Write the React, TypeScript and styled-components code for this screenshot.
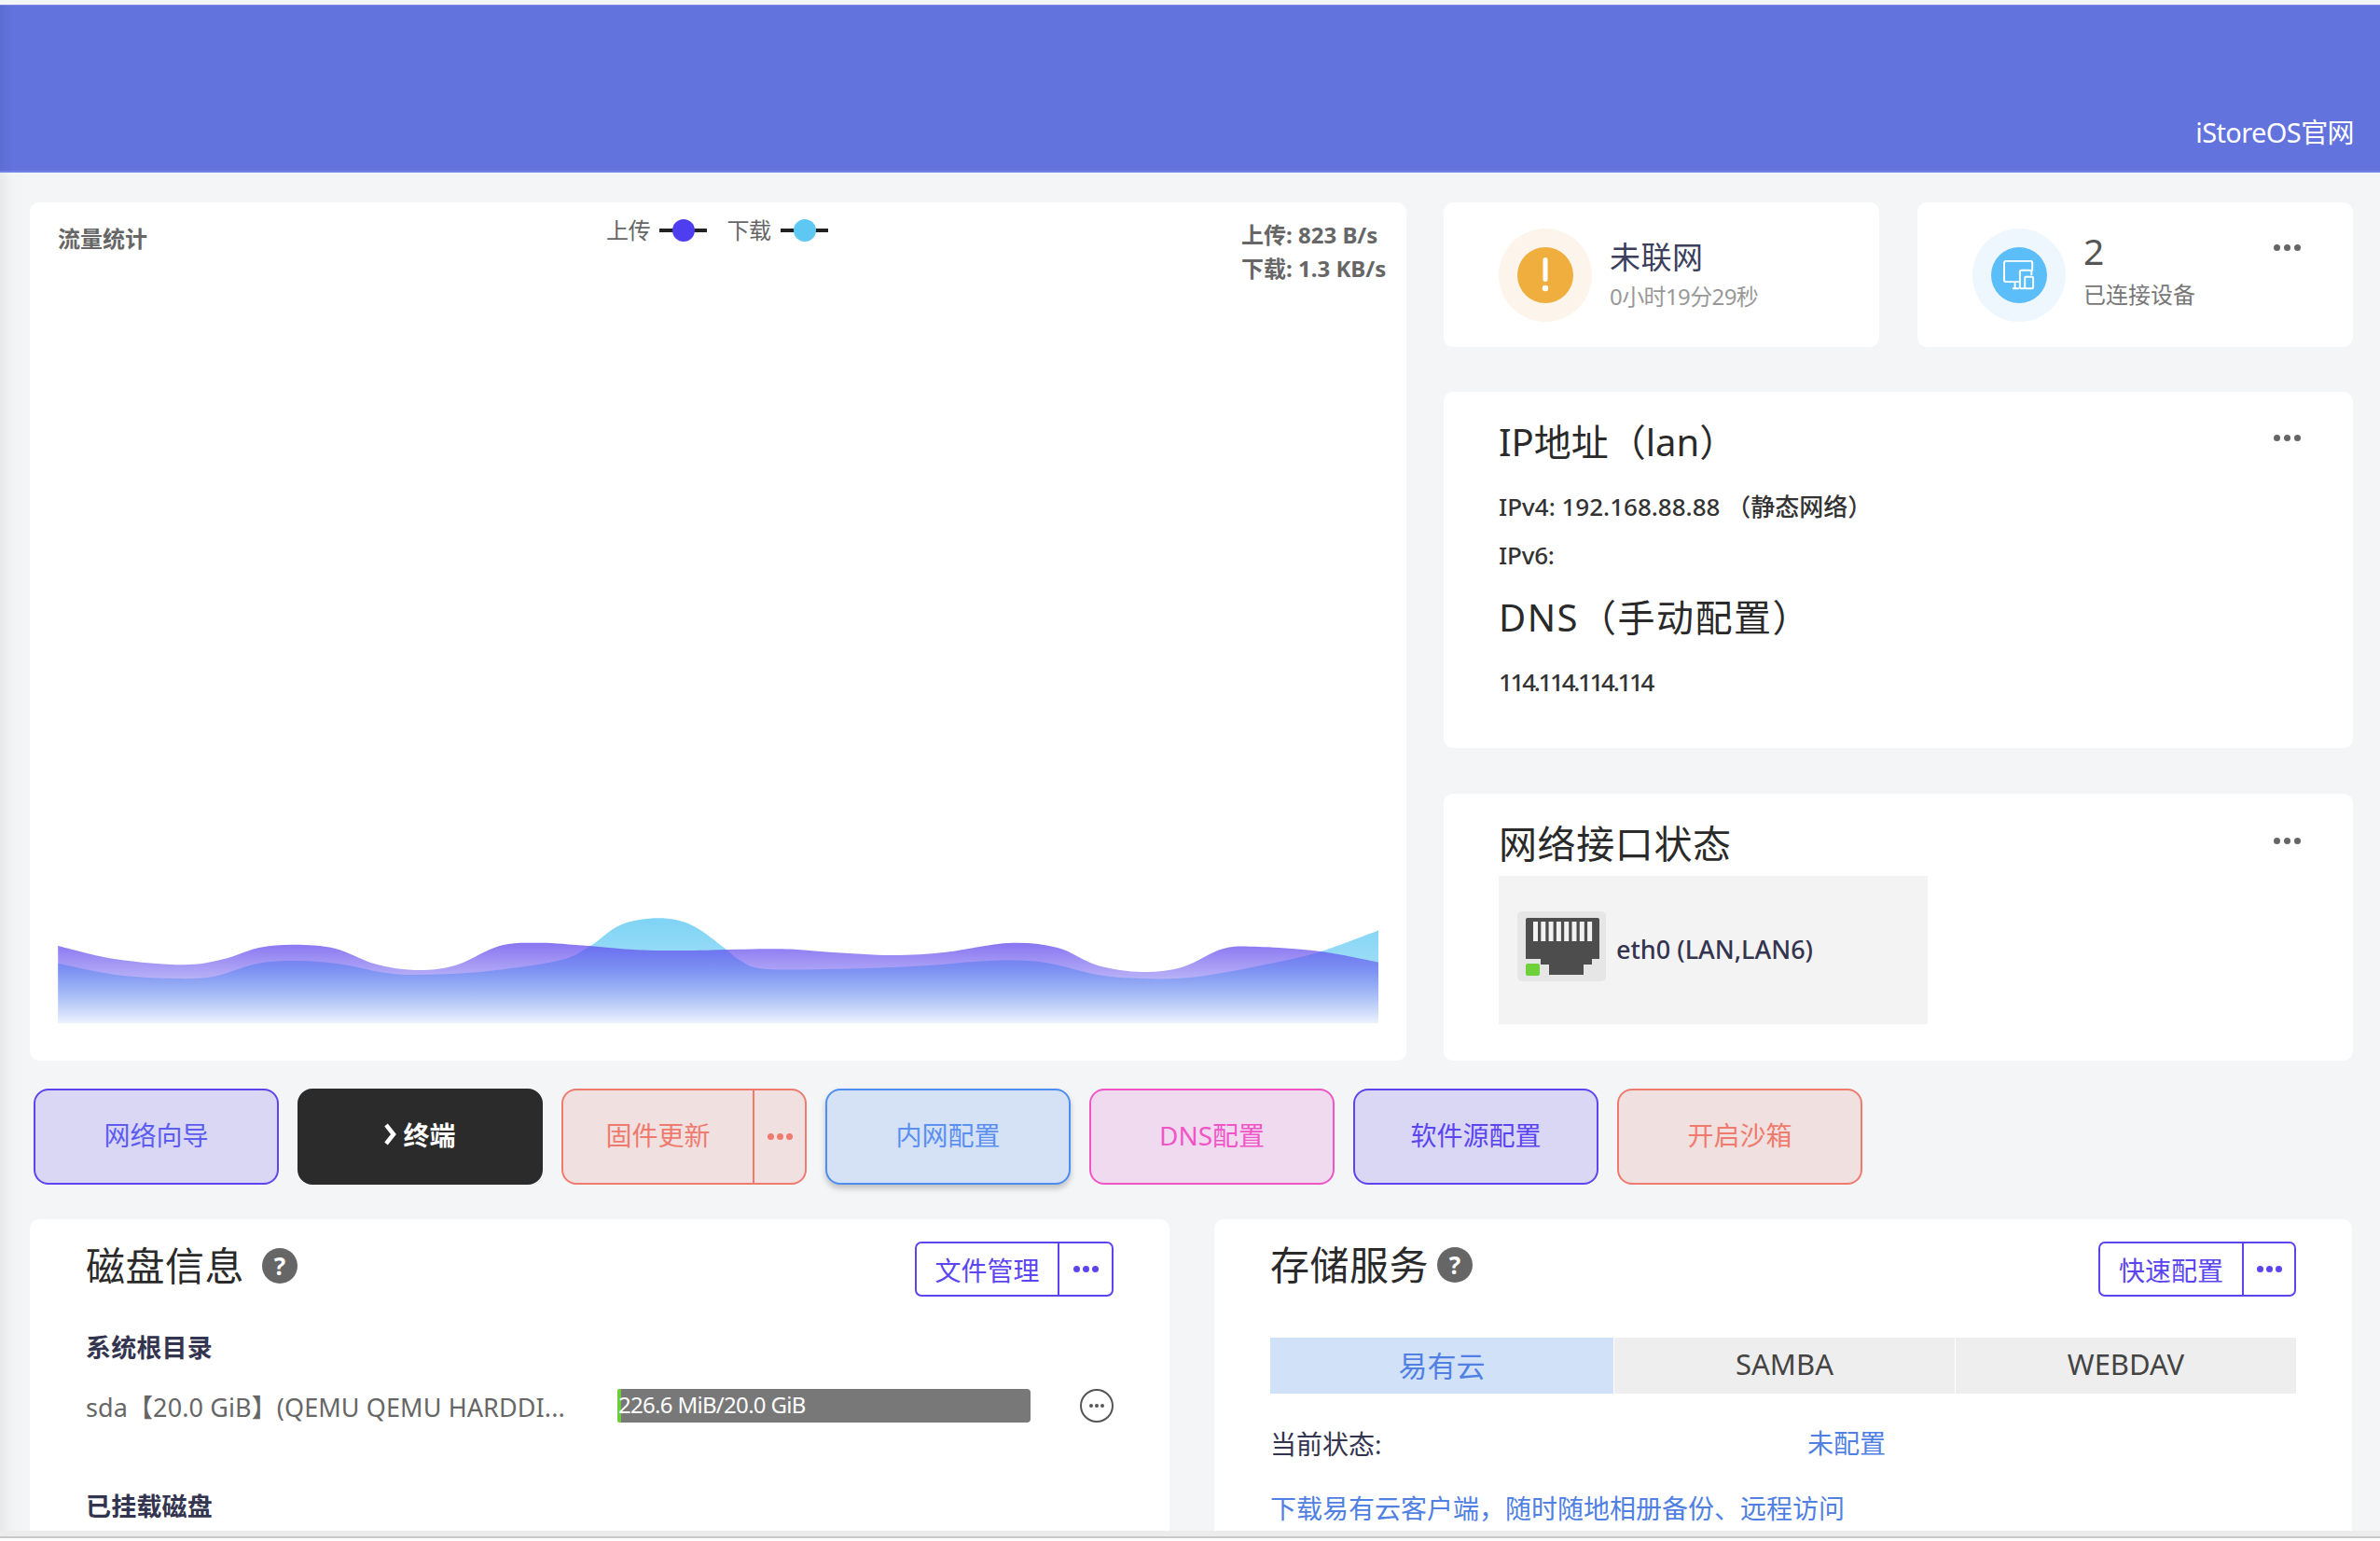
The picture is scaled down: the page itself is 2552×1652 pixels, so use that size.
import React from "react";
import styled, { createGlobalStyle } from "styled-components";

const FONT = `"Noto Sans", "Noto Sans CJK SC", "Liberation Sans", sans-serif`;

const Global = createGlobalStyle`
  html, body { margin: 0; padding: 0; background: #fff; }
  body { font-family: ${FONT}; }
  * { box-sizing: border-box; }
`;

const Frame = styled.div`
  width: 2552px;
  height: 1652px;
  overflow: hidden;
  display: flex;
  flex-direction: column;
  background: #fff;
`;
const Viewport = styled.div`
  height: 1641px;
  overflow: hidden;
  flex: none;
  background: #f4f5f7;
  padding-top: 5px;
`;
const BottomBar = styled.div`
  height: 8px;
  flex: none;
  background: #ececec;
  border-bottom: 2px solid #c9c9c9;
`;
const Header = styled.header`
  height: 180px;
  background: linear-gradient(90deg, #5b6dd2 0, #6373dd 14px, #6373dd 100%);
  border-top: 1px solid #7a87e4;
  border-bottom: 2px solid #7381e6;
  display: flex;
  justify-content: flex-end;
  align-items: flex-end;
  padding: 0 28px 23px 0;
`;
const HeaderLink = styled.a`
  color: #fff;
  font-size: 29px;
  line-height: 36px;
  letter-spacing: -0.6px;
`;
const Main = styled.main`
  background: linear-gradient(90deg, #e8e9eb 0, #f3f4f6 14px, #f4f5f7 32px);
  padding: 32px 29px 0 32px;
  height: 1456px;
  overflow: hidden;
`;
const TopRow = styled.div`
  display: grid;
  grid-template-columns: 1476px 975px;
  column-gap: 40px;
  height: 920px;
`;
const Card = styled.section`
  background: #fff;
  border-radius: 10px;
`;
const ChartCard = styled(Card)`
  display: flex;
  flex-direction: column;
  justify-content: space-between;
  padding: 18px 20px 40px 30px;
`;
const ChartHead = styled.div`
  display: flex;
  align-items: flex-start;
`;
const ChartTitle = styled.div`
  width: 588px;
  padding-top: 5px;
  font-size: 24px;
  line-height: 32px;
  font-weight: 700;
  color: #666;
`;
const Legend = styled.div`
  display: flex;
  align-items: center;
  width: 681px;
  height: 24px;
`;
const LegendLabel = styled.span`
  font-size: 24px;
  line-height: 24px;
  color: #666;
  letter-spacing: -0.3px;
`;
const LegendLine = styled.span<{ $c: string; $gap: number }>`
  position: relative;
  width: 51px;
  height: 4px;
  margin: 0 ${(p) => p.$gap}px 0 10px;
  background: #222;
  &::after {
    content: "";
    position: absolute;
    left: 14px;
    top: -10px;
    width: 24px;
    height: 24px;
    border-radius: 50%;
    background: ${(p) => p.$c};
  }
`;
const Rates = styled.div`
  padding-top: 1px;
  display: flex;
  flex-direction: column;
  gap: 4px;
`;
const RateLine = styled.div`
  font-size: 24px;
  line-height: 32px;
  font-weight: 700;
  color: #666;
  white-space: nowrap;
`;
const ChartSvg = styled.svg`
  display: block;
  width: 1416px;
  height: 120px;
  flex: none;
`;
const Side = styled.div`
  display: flex;
  flex-direction: column;
`;
const StatusRow = styled.div`
  display: grid;
  grid-template-columns: 467px 467px;
  column-gap: 41px;
  height: 155px;
  flex: none;
  margin-bottom: 48px;
`;
const StatusCard = styled(Card)`
  position: relative;
  display: flex;
  align-items: center;
  padding: 0 0 0 59px;
  gap: 19px;
`;
const Halo = styled.div<{ $c: string; $i: string }>`
  width: 100px;
  height: 100px;
  border-radius: 50%;
  background: ${(p) => p.$c};
  display: flex;
  align-items: center;
  justify-content: center;
  flex: none;
  & > div {
    width: 60px;
    height: 60px;
    border-radius: 50%;
    background: ${(p) => p.$i};
    display: flex;
    align-items: center;
    justify-content: center;
  }
`;
const StatusText = styled.div`
  display: flex;
  flex-direction: column;
`;
const StatusTitle = styled.div`
  font-size: 33px;
  line-height: 44px;
  color: #3c3f5c;
  letter-spacing: 0.5px;
  margin-top: -2px;
`;
const StatusSub = styled.div`
  font-size: 24px;
  line-height: 32px;
  color: #999;
  margin-top: 4px;
  letter-spacing: -0.6px;
`;
const CountNum = styled.div`
  font-size: 39px;
  line-height: 44px;
  color: #555;
  margin-top: -10px;
`;
const CountSub = styled.div`
  font-size: 24px;
  line-height: 32px;
  color: #777;
  margin-top: 9px;
`;
const Dots = styled.div<{ $top: number }>`
  position: absolute;
  right: 56px;
  top: ${(p) => p.$top}px;
  display: flex;
  gap: 4px;
  & > i {
    width: 7px;
    height: 7px;
    border-radius: 50%;
    background: #666;
  }
`;
const InfoCard = styled(Card)`
  position: relative;
  height: 382px;
  flex: none;
  padding: 28px 60px 0 59px;
  margin-bottom: 49px;
  color: #222;
`;
const InfoTitle = styled.div<{ $mt?: number; $ls?: number }>`
  font-size: 40px;
  line-height: 52px;
  color: #2a2a2a;
  margin-top: ${(p) => p.$mt ?? 0}px;
  letter-spacing: ${(p) => p.$ls ?? 0}px;
`;
const InfoLine = styled.div<{ $mt: number; $ls: number }>`
  font-size: 26px;
  line-height: 36px;
  font-weight: 500;
  color: #333;
  margin-top: ${(p) => p.$mt}px;
  letter-spacing: ${(p) => p.$ls}px;
`;
const NetCard = styled(Card)`
  position: relative;
  height: 286px;
  flex: none;
  padding: 19px 60px 0 59px;
`;
const NetTitle = styled.div`
  font-size: 41px;
  line-height: 69px;
  color: #2a2a2a;
  letter-spacing: 0.6px;
`;
const PortBox = styled.div`
  width: 460px;
  height: 159px;
  background: #f3f3f3;
  padding: 38px 0 0 20px;
  display: flex;
  align-items: flex-start;
  gap: 11px;
`;
const PortTile = styled.div`
  width: 95px;
  height: 75px;
  background: #e6e6e6;
  border-radius: 5px;
  flex: none;
  display: flex;
`;
const PortName = styled.div`
  font-size: 27px;
  line-height: 36px;
  font-weight: 500;
  color: #33344f;
  margin-top: 23px;
`;
const ButtonRow = styled.div`
  display: flex;
  gap: 20px;
  margin: 30px 0 37px 4px;
  height: 103px;
`;
type Tone = { $bd: string; $bg: string; $fg: string; $shadow?: boolean };
const ActionButton = styled.button<Tone>`
  width: 263px;
  height: 103px;
  padding: 0;
  display: flex;
  overflow: hidden;
  border: 2px solid ${(p) => p.$bd};
  background: ${(p) => p.$bg};
  color: ${(p) => p.$fg};
  border-radius: 16px;
  font-family: ${FONT};
  font-size: 28px;
  box-shadow: ${(p) => (p.$shadow ? "0 4px 6px rgba(0,0,0,.22)" : "none")};
`;
const ButtonMain = styled.span<{ $bold?: boolean }>`
  flex: 1;
  display: flex;
  align-items: center;
  justify-content: center;
  gap: 6px;
  height: 100%;
  padding-bottom: 5px;
  font-weight: ${(p) => (p.$bold ? 700 : 400)};
`;
const ButtonMore = styled.span<{ $bd: string }>`
  width: 56px;
  flex: none;
  height: 100%;
  border-left: 2px solid ${(p) => p.$bd};
  display: flex;
  align-items: center;
  justify-content: center;
  gap: 3px;
  & > i {
    width: 7px;
    height: 7px;
    border-radius: 50%;
    background: currentColor;
  }
`;
const BottomRow = styled.div`
  display: grid;
  grid-template-columns: 1222px 1220px;
  column-gap: 48px;
`;
const PanelCard = styled(Card)`
  height: 420px;
  padding: 24px 60px 0;
`;
const PanelHead = styled.div<{ $h: number }>`
  display: flex;
  align-items: flex-start;
  justify-content: space-between;
  height: ${(p) => p.$h}px;
`;
const PanelTitleWrap = styled.div<{ $gap: number; $off: number }>`
  display: flex;
  align-items: center;
  gap: ${(p) => p.$gap}px;
  margin-top: ${(p) => p.$off}px;
`;
const PanelTitle = styled.div`
  font-size: 42px;
  line-height: 56px;
  color: #2a2a2a;
  letter-spacing: 0.5px;
`;
const Help = styled.div`
  width: 38px;
  height: 38px;
  border-radius: 50%;
  background: #666;
  color: #fff;
  font-size: 26px;
  font-weight: 700;
  line-height: 38px;
  text-align: center;
`;
const SplitButton = styled.div<{ $main: number; $w: number }>`
  display: grid;
  grid-template-columns: ${(p) => p.$main}px 1fr;
  width: ${(p) => p.$w}px;
  height: 59px;
  border: 2px solid #5b45f0;
  border-radius: 7px;
  color: #5b45f0;
  font-size: 28px;
  margin-left: auto;
  & > span:first-child {
    display: flex;
    align-items: center;
    justify-content: center;
    border-right: 2px solid #5b45f0;
  }
`;
const SplitDots = styled.span`
  display: flex;
  align-items: center;
  justify-content: center;
  gap: 3px;
  & > i {
    width: 7px;
    height: 7px;
    border-radius: 50%;
    background: currentColor;
  }
`;
const DiskHeading = styled.div`
  font-size: 27px;
  line-height: 36px;
  font-weight: 700;
  color: #33344f;
  letter-spacing: 0.2px;
`;
const DiskRow = styled.div`
  display: flex;
  align-items: center;
  height: 36px;
  margin: 26px 0 72px;
`;
const DiskName = styled.div`
  width: 570px;
  flex: none;
  font-size: 27px;
  color: #666;
  white-space: nowrap;
  letter-spacing: 0.1px;
`;
const DiskBar = styled.div`
  width: 443px;
  height: 36px;
  flex: none;
  background: #787878;
  border-left: 4px solid #6ecb3c;
  border-radius: 2px 4px 4px 2px;
  color: #fff;
  font-size: 24px;
  line-height: 34px;
  text-indent: -3px;
  letter-spacing: -0.7px;
`;
const DiskMore = styled.div`
  width: 36px;
  height: 36px;
  border-radius: 50%;
  border: 2px solid #555;
  margin-left: 53px;
  flex: none;
  display: flex;
  align-items: center;
  justify-content: center;
  gap: 2px;
  & > i {
    width: 4px;
    height: 4px;
    border-radius: 50%;
    background: #555;
  }
`;
const Tabs = styled.div`
  display: grid;
  grid-template-columns: 368px 365px 365px;
  column-gap: 1px;
  height: 60px;
`;
const Tab = styled.div<{ $on?: boolean }>`
  display: flex;
  align-items: center;
  justify-content: center;
  padding-bottom: 4px;
  font-size: 31px;
  color: ${(p) => (p.$on ? "#4f80e2" : "#444")};
  background: ${(p) => (p.$on ? "#d1e1f8" : "#eeeeee")};
`;
const StateRow = styled.div`
  display: grid;
  grid-template-columns: 576px 1fr;
  margin: 33px 0 36px;
  height: 36px;
  align-items: center;
`;
const StateLabel = styled.span`
  font-size: 28px;
  color: #33344f;
`;
const BlueText = styled.span`
  font-size: 28px;
  line-height: 36px;
  color: #4f80e2;
`;

type P = [number, number];
const purple: P[] = [[65,222],[130,265],[205,283],[250,265],[290,228],[330,218],[375,230],[420,280],[465,300],[510,285],[560,222],[605,212],[660,222],[735,237],[870,232],[930,242],[1000,252],[1060,242],[1130,213],[1185,228],[1230,285],[1280,306],[1325,290],[1370,232],[1410,225],[1480,240],[1545,275]];
const cyan: P[] = [[65,278],[130,315],[195,327],[240,320],[290,278],[335,270],[380,280],[430,308],[470,315],[540,305],[625,270],[660,225],[695,155],[738,133],[775,155],[810,225],[830,270],[860,297],[960,295],[1040,285],[1110,270],[1170,275],[1230,315],[1280,327],[1340,322],[1430,275],[1480,240],[1545,172]];

const toLocal = (pts: P[]): P[] => pts.map(([x, y]) => [x / 1.045 - 62, y / 3 - 37]);

function areaPath(raw: P[]): string {
  const p = toLocal(raw);
  let d = `M${p[0][0]},120 L${p[0][0]},${p[0][1]}`;
  for (let i = 0; i < p.length - 1; i++) {
    const a = p[Math.max(0, i - 1)], b = p[i], c = p[i + 1], e = p[Math.min(p.length - 1, i + 2)];
    const c1: P = [b[0] + (c[0] - a[0]) / 6, b[1] + (c[1] - a[1]) / 6];
    const c2: P = [c[0] - (e[0] - b[0]) / 6, c[1] - (e[1] - b[1]) / 6];
    d += ` C${c1[0].toFixed(1)},${c1[1].toFixed(1)} ${c2[0].toFixed(1)},${c2[1].toFixed(1)} ${c[0].toFixed(1)},${c[1].toFixed(1)}`;
  }
  d += ` L${p[p.length - 1][0]},120 Z`;
  return d;
}

const Three = () => (
  <>
    <i />
    <i />
    <i />
  </>
);

export default function App() {
  return (
    <Frame>
      <Global />
      <Viewport>
        <Header>
          <HeaderLink>iStoreOS官网</HeaderLink>
        </Header>
        <Main>
          <TopRow>
            <ChartCard>
              <ChartHead>
                <ChartTitle>流量统计</ChartTitle>
                <Legend>
                  <LegendLabel>上传</LegendLabel>
                  <LegendLine $c="#4f3ef0" $gap={21} />
                  <LegendLabel>下载</LegendLabel>
                  <LegendLine $c="#5ec8f2" $gap={0} />
                </Legend>
                <Rates>
                  <RateLine>上传: 823 B/s</RateLine>
                  <RateLine>下载: 1.3 KB/s</RateLine>
                </Rates>
              </ChartHead>
              <ChartSvg viewBox="0 0 1416 120">
                <defs>
                  <linearGradient id="gc" gradientUnits="userSpaceOnUse" x1="0" y1="7" x2="0" y2="120">
                    <stop offset="0" stopColor="#5ec8f2" stopOpacity="0.8" />
                    <stop offset="0.5" stopColor="#62c8f4" stopOpacity="0.6" />
                    <stop offset="1" stopColor="#5ec8f2" stopOpacity="0.05" />
                  </linearGradient>
                  <linearGradient id="gp" gradientUnits="userSpaceOnUse" x1="0" y1="34" x2="0" y2="120">
                    <stop offset="0" stopColor="#5a40ec" stopOpacity="0.72" />
                    <stop offset="1" stopColor="#5a50ec" stopOpacity="0.06" />
                  </linearGradient>
                </defs>
                <path d={areaPath(cyan)} fill="url(#gc)" />
                <path d={areaPath(purple)} fill="url(#gp)" />
              </ChartSvg>
            </ChartCard>
            <Side>
              <StatusRow>
                <StatusCard>
                  <Halo $c="#fdf5ec" $i="#efae3e">
                    <div>
                      <svg width="12" height="38" viewBox="0 0 12 38">
                        <rect x="3.5" y="0" width="5" height="26" rx="2.5" fill="#fff" />
                        <circle cx="6" cy="33" r="3.2" fill="#fff" />
                      </svg>
                    </div>
                  </Halo>
                  <StatusText>
                    <StatusTitle>未联网</StatusTitle>
                    <StatusSub>0小时19分29秒</StatusSub>
                  </StatusText>
                </StatusCard>
                <StatusCard>
                  <Halo $c="#eff7fe" $i="#5cbef8">
                    <div>
                      <svg width="34" height="32" viewBox="0 0 38 36" fill="none" stroke="#fff" strokeWidth="2.2">
                        <path d="M19 26H3a2 2 0 0 1-2-2V3a2 2 0 0 1 2-2h30a2 2 0 0 1 2 2v10" />
                        <path d="M11 34h8M14 26v8" />
                        <path d="M20 34V14a2 2 0 0 1 2-2h10a2 2 0 0 1 2 2v4" />
                        <path d="M20 34h6" />
                        <rect x="26" y="20" width="10" height="14" rx="1.5" />
                      </svg>
                    </div>
                  </Halo>
                  <StatusText>
                    <CountNum>2</CountNum>
                    <CountSub>已连接设备</CountSub>
                  </StatusText>
                  <Dots $top={45}><Three /></Dots>
                </StatusCard>
              </StatusRow>
              <InfoCard>
                <Dots $top={46}><Three /></Dots>
                <InfoTitle>IP地址（lan）</InfoTitle>
                <InfoLine $mt={25} $ls={0}>IPv4: 192.168.88.88 （静态网络）</InfoLine>
                <InfoLine $mt={16} $ls={-0.2}>IPv6:</InfoLine>
                <InfoTitle $mt={23} $ls={1.5}>DNS（手动配置）</InfoTitle>
                <InfoLine $mt={25} $ls={-2.3}>114.114.114.114</InfoLine>
              </InfoCard>
              <NetCard>
                <Dots $top={47}><Three /></Dots>
                <NetTitle>网络接口状态</NetTitle>
                <PortBox>
                  <PortTile>
                    <svg width="95" height="75" viewBox="0 0 95 75">
                      <path d="M9 9a2 2 0 0 1 2-2h75a2 2 0 0 1 2 2v42h-8v6h-9v11H34V57h-9v-6H9z" fill="#4d4d4d" />
                      {[0, 1, 2, 3, 4, 5, 6, 7].map((i) => (
                        <rect key={i} x={17 + i * 8.3} y="11" width="5" height="21" fill="#f2f2f2" />
                      ))}
                      <rect x="9" y="56" width="15" height="13" rx="2" fill="#6fd13a" />
                    </svg>
                  </PortTile>
                  <PortName>eth0 (LAN,LAN6)</PortName>
                </PortBox>
              </NetCard>
            </Side>
          </TopRow>
          <ButtonRow>
            <ActionButton $bd="#5b45f0" $bg="#dad7f5" $fg="#5b5cf0">
              <ButtonMain>网络向导</ButtonMain>
            </ActionButton>
            <ActionButton $bd="#2b2b2b" $bg="#2b2b2b" $fg="#fff">
              <ButtonMain $bold>
                <svg width="14" height="24" viewBox="0 0 14 24" fill="none" stroke="#fff" strokeWidth="4.5">
                  <path d="M2 2l8 10-8 10" />
                </svg>
                终端
              </ButtonMain>
            </ActionButton>
            <ActionButton $bd="#ee7b6e" $bg="#f0e0e0" $fg="#ee7b6e">
              <ButtonMain>固件更新</ButtonMain>
              <ButtonMore $bd="#ee7b6e"><Three /></ButtonMore>
            </ActionButton>
            <ActionButton $bd="#4d8ef0" $bg="#d5e2f5" $fg="#5b8ff0" $shadow>
              <ButtonMain>内网配置</ButtonMain>
            </ActionButton>
            <ActionButton $bd="#f055c8" $bg="#f0daef" $fg="#f055c8">
              <ButtonMain>DNS配置</ButtonMain>
            </ActionButton>
            <ActionButton $bd="#5b45f0" $bg="#dad7f5" $fg="#5b45f0">
              <ButtonMain>软件源配置</ButtonMain>
            </ActionButton>
            <ActionButton $bd="#ee7b6e" $bg="#f0e0e0" $fg="#ee7b6e">
              <ButtonMain>开启沙箱</ButtonMain>
            </ActionButton>
          </ButtonRow>
          <BottomRow>
            <PanelCard>
              <PanelHead $h={96}>
                <PanelTitleWrap $gap={19} $off={-2}>
                  <PanelTitle>磁盘信息</PanelTitle>
                  <Help>?</Help>
                </PanelTitleWrap>
                <SplitButton $main={153} $w={213}>
                  <span>文件管理</span>
                  <SplitDots><Three /></SplitDots>
                </SplitButton>
              </PanelHead>
              <DiskHeading>系统根目录</DiskHeading>
              <DiskRow>
                <DiskName>sda【20.0 GiB】(QEMU QEMU HARDDI...</DiskName>
                <DiskBar>226.6 MiB/20.0 GiB</DiskBar>
                <DiskMore><Three /></DiskMore>
              </DiskRow>
              <DiskHeading>已挂载磁盘</DiskHeading>
            </PanelCard>
            <PanelCard>
              <PanelHead $h={103}>
                <PanelTitleWrap $gap={9} $off={-3}>
                  <PanelTitle>存储服务</PanelTitle>
                  <Help>?</Help>
                </PanelTitleWrap>
                <SplitButton $main={154} $w={212}>
                  <span>快速配置</span>
                  <SplitDots><Three /></SplitDots>
                </SplitButton>
              </PanelHead>
              <Tabs>
                <Tab $on>易有云</Tab>
                <Tab>SAMBA</Tab>
                <Tab>WEBDAV</Tab>
              </Tabs>
              <StateRow>
                <StateLabel>当前状态:</StateLabel>
                <BlueText>未配置</BlueText>
              </StateRow>
              <BlueText>下载易有云客户端，随时随地相册备份、远程访问</BlueText>
            </PanelCard>
          </BottomRow>
        </Main>
      </Viewport>
      <BottomBar />
    </Frame>
  );
}
